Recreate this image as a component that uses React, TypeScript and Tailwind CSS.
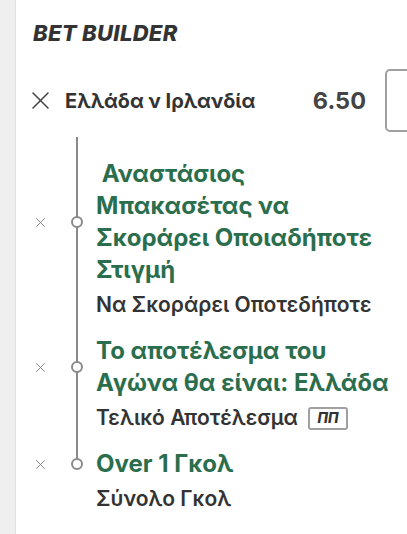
interface Leg {
    title: string;
    market: string;
    badge?: string;
}

const legs: Leg[] = [
    { title: "\u00a0Αναστάσιος Μπακασέτας να Σκοράρει Οποιαδήποτε Στιγμή", market: "Να Σκοράρει Οποτεδήποτε" },
    { title: "Το αποτέλεσμα του Αγώνα θα είναι: Ελλάδα", market: "Τελικό Αποτέλεσμα", badge: "ΠΠ" },
    { title: "Over 1 Γκολ", market: "Σύνολο Γκολ" },
];

function Cross({ size, stroke, color }: { size: number; stroke: number; color: string }) {
    return (
        <svg width={size} height={size} viewBox="0 0 10 10" fill="none" stroke={color} strokeWidth={stroke} strokeLinecap="round">
            <path d="M0.6 0.6 L9.4 9.4 M9.4 0.6 L0.6 9.4" />
        </svg>
    );
}

function LegRow({ leg }: { leg: Leg }) {
    return (
        <div className="flex flex-col">
            <div className="flex items-center">
                <span className="w-[9px] flex justify-center">
                    <Cross size={9} stroke={1} color="#7a7a7a" />
                </span>
                <span className="ml-[26px] w-[12px] h-[12px] shrink-0 rounded-full border-2 border-[#8a8a8a] bg-white relative z-10" />
                <div className="ml-[13px] w-[302px] text-[24px] leading-[32px] font-bold text-[#2a6e4d]">
                    {leg.title}
                </div>
            </div>
            <div className="mt-[4px] pl-[60px] flex items-center gap-[10px] text-[21px] leading-[30px] font-semibold text-[#333]">
                <span>{leg.market}</span>
                {leg.badge && (
                    <span className="border-2 border-[#a0a0a0] rounded-[3px] w-[40px] h-[23px] flex items-center justify-center text-[14px] leading-none font-extrabold italic text-[#333]">
                        {leg.badge}
                    </span>
                )}
            </div>
        </div>
    );
}

export default function App() {
    return (
        <div className="flex w-[407px] h-[534px] overflow-hidden bg-white" style={{ fontFamily: "Inter, 'Noto Sans', sans-serif" }}>
            <div className="w-[16px] shrink-0 bg-[#efefef] border-r border-[#e2e2e2]" />
            <div className="flex-1 flex flex-col">
                <h1 className="pl-[17px] mt-[20px] text-[22px] leading-[26px] font-extrabold italic text-[#333] tracking-[0.3px]">
                    BET BUILDER
                </h1>

                <div className="mt-[23px] flex items-center">
                    <span className="ml-[16px]">
                        <Cross size={17} stroke={0.9} color="#444" />
                    </span>
                    <span className="ml-[16px] text-[20px] font-bold text-[#333]">Ελλάδα ν Ιρλανδία</span>
                    <span className="ml-auto text-[23.5px] font-bold text-[#444]">6.50</span>
                    <div className="ml-[19px] -mr-[10px] w-[32px] h-[63px] rounded-[5px] border-2 border-[#a0a0a0]" />
                </div>

                <div className="relative pt-[26px] pl-[20px] flex flex-col gap-[15px]">
                    <div className="absolute left-[60px] top-[5px] bottom-[50px] w-[2px] bg-[#8a8a8a]" />
                    {legs.map((leg) => (
                        <LegRow key={leg.market} leg={leg} />
                    ))}
                </div>
            </div>
        </div>
    );
}
